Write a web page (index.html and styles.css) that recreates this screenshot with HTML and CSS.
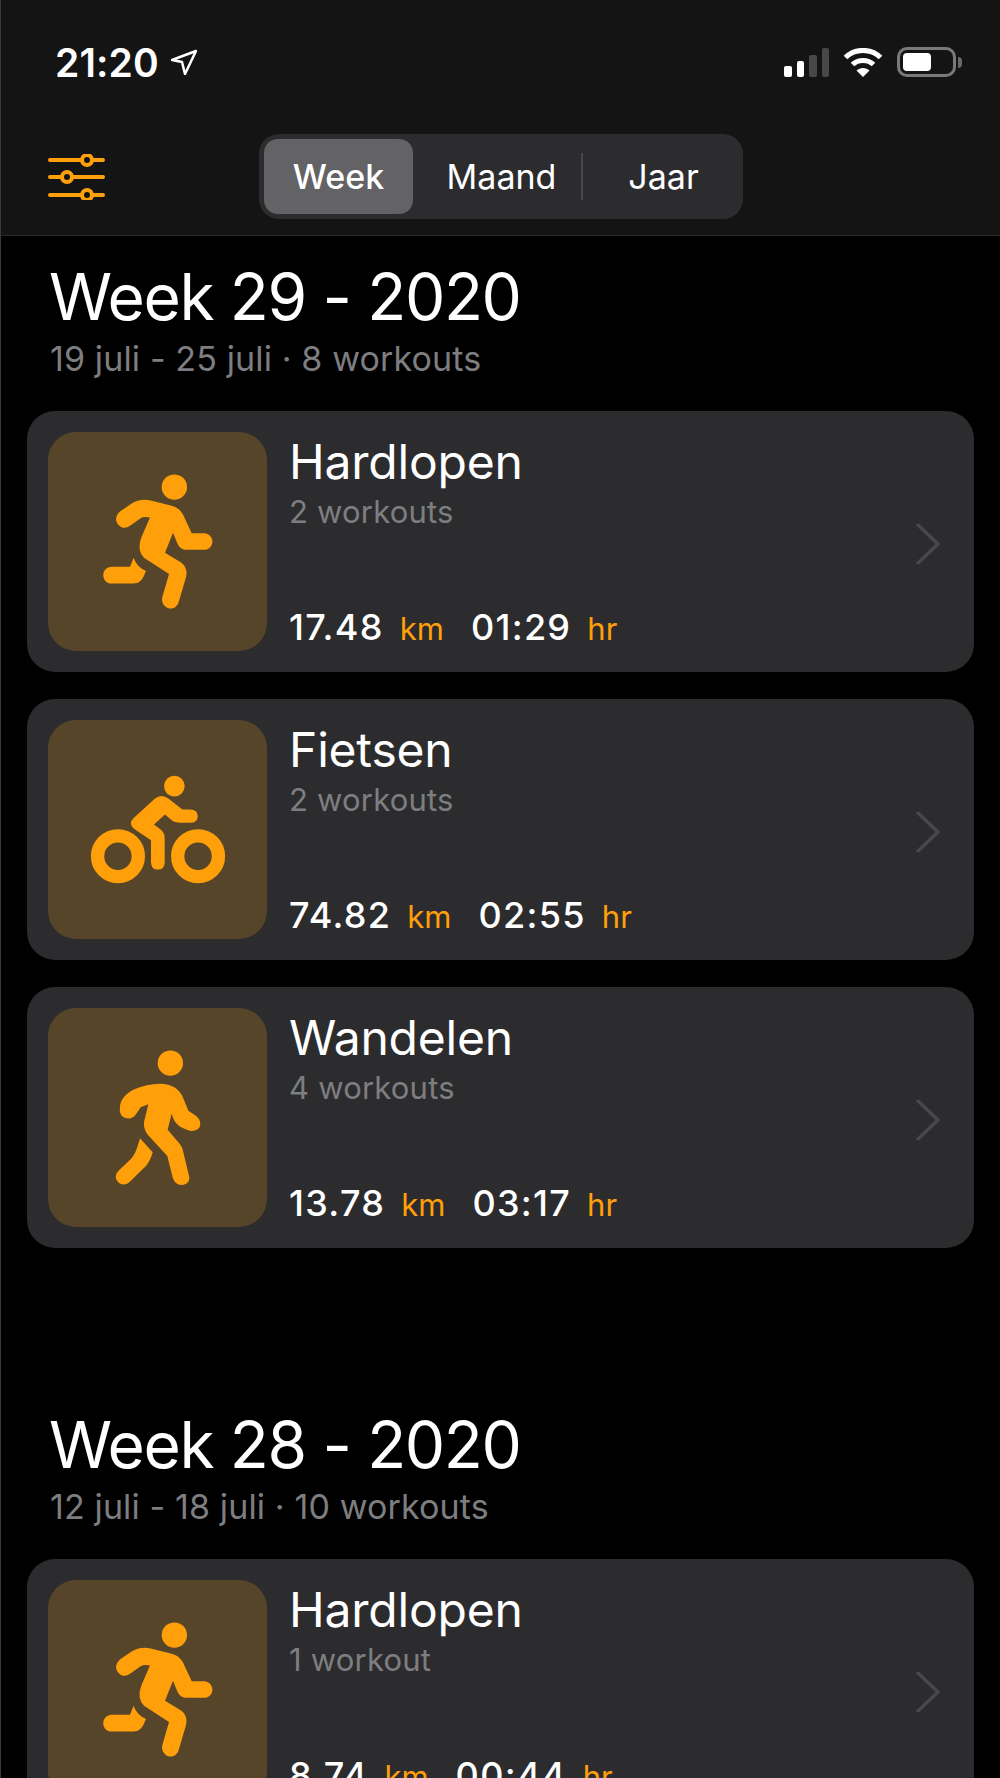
FILE: index.html
```html
<!DOCTYPE html>
<html lang="en">
<head>
    <meta charset="UTF-8">
    <meta name="viewport" content="width=device-width, initial-scale=1.0">
    <title>Workouts</title>
    <link rel="stylesheet" href="styles.css">
</head>
<body>
    <svg class="sprite" width="0" height="0">
        <symbol id="icon-run" viewBox="85 96 655 656">
            <circle cx="463" cy="261" r="38"/>
            <path d="M330 377 L362 354 Q372 348 390 352 L364 412 Q350 450 372 473 L447 521 L427 590 C422 612 440 625 452 625 C465 625 473 615 476 605 L498 530 C503 510 495 495 482 486 L435 458 L459 398 L472 430 C478 443 488 449 500 449 L552 449 C566 449 577 438 577 424 C577 410 566 399 552 399 L515 399 L490 345 C482 330 472 322 455 317 L392 301 C372 296 350 300 335 310 L302 333 C288 344 284 360 294 372 C304 385 318 386 330 377 Z"/>
            <path d="M275 500 L330 500 L341 473 C348 492 360 505 378 512 L370 530 C362 545 352 550 335 550 L275 550 C261 550 250 539 250 525 C250 511 261 500 275 500 Z"/>
        </symbol>
        <symbol id="icon-bike" viewBox="85 92 655 656">
            <circle cx="463" cy="290" r="31"/>
            <circle class="wheel" cx="294" cy="500" r="61"/>
            <circle class="wheel" cx="534" cy="500" r="61"/>
            <path d="M342 385 L405 327 Q425 312 445 327 L487 360 L510 360 Q533 360 533 380 Q533 400 510 400 L478 400 Q465 400 455 392 L435 375 L402 405 L422 420 Q434 430 434 445 L434 518 Q434 540 413 540 Q393 540 393 518 L393 452 L345 420 Q322 403 342 385 Z"/>
        </symbol>
        <symbol id="icon-walk" viewBox="85 87 655 656">
            <circle cx="451" cy="252" r="38"/>
            <path d="M300 385 C300 365 315 345 340 332 C365 320 395 314 420 314 C455 314 480 330 490 358 L505 395 L525 408 C545 420 545 445 530 452 C515 460 500 452 485 445 C470 437 460 425 455 403 L443 452 L480 495 Q487 503 490 520 L507 590 C512 610 495 617 483 617 C470 617 462 607 458 595 L442 530 L382 465 Q368 445 373 425 L385 375 L362 384 L348 405 C340 418 325 420 315 416 C303 412 298 400 300 385 Z"/>
            <path d="M360 477 L398 519 C392 540 385 555 370 568 L332 605 C318 620 300 618 292 605 C284 592 288 582 298 572 L332 540 C345 528 352 505 360 477 Z"/>
        </symbol>
        <symbol id="icon-chevron" viewBox="0 0 24 40">
            <path d="M2 1 L22 20 L2 39"/>
        </symbol>
    </svg>

    <header class="top">
        <div class="status-bar">
            <div class="clock">
                <span>21:20</span>
                <svg class="location" viewBox="0 0 26 26"><path d="M1 11 L25 2 L14 25 L11 13 Z"/></svg>
            </div>
            <div class="status-icons">
                <div class="signal">
                    <i class="bar bar-1"></i>
                    <i class="bar bar-2"></i>
                    <i class="bar bar-3 off"></i>
                    <i class="bar bar-4 off"></i>
                </div>
                <svg class="wifi" viewBox="0 0 40 29">
                    <path d="M20 29 L13.5 22.5 C17 19 23 19 26.5 22.5 Z"/>
                    <path class="arc" d="M9.5 16.5 C15 11 25 11 30.5 16.5"/>
                    <path class="arc" d="M2.5 9.5 C12 0 28 0 37.5 9.5"/>
                </svg>
                <div class="battery"><div class="battery-level"></div></div>
                <div class="battery-nub"></div>
            </div>
        </div>
        <div class="toolbar">
            <svg class="filter" viewBox="0 0 57 46">
                <path d="M2 6 H34 M44 6 H55 M2 23 H14 M24 23 H55 M2 41 H34 M44 41 H55"/>
                <circle cx="39" cy="6" r="5"/>
                <circle cx="19" cy="23" r="5"/>
                <circle cx="39" cy="41" r="5"/>
            </svg>
            <div class="segments">
                <div class="segment active">Week</div>
                <div class="segment month">Maand</div>
                <div class="segment year">Jaar</div>
            </div>
        </div>
    </header>

    <main>
        <section class="week">
            <h1>Week 29 - 2020</h1>
            <p class="range">19 juli - 25 juli · 8 workouts</p>

            <div class="card">
                <div class="tile"><svg><use href="#icon-run"/></svg></div>
                <div class="info">
                    <div>
                        <h2>Hardlopen</h2>
                        <p class="count">2 workouts</p>
                    </div>
                    <div class="stats"><b>17.48</b><span>km</span><b>01:29</b><span>hr</span></div>
                </div>
                <svg class="chevron"><use href="#icon-chevron"/></svg>
            </div>

            <div class="card">
                <div class="tile"><svg><use href="#icon-bike"/></svg></div>
                <div class="info">
                    <div>
                        <h2>Fietsen</h2>
                        <p class="count">2 workouts</p>
                    </div>
                    <div class="stats"><b>74.82</b><span>km</span><b>02:55</b><span>hr</span></div>
                </div>
                <svg class="chevron"><use href="#icon-chevron"/></svg>
            </div>

            <div class="card">
                <div class="tile"><svg><use href="#icon-walk"/></svg></div>
                <div class="info">
                    <div>
                        <h2>Wandelen</h2>
                        <p class="count">4 workouts</p>
                    </div>
                    <div class="stats"><b>13.78</b><span>km</span><b>03:17</b><span>hr</span></div>
                </div>
                <svg class="chevron"><use href="#icon-chevron"/></svg>
            </div>
        </section>

        <section class="week">
            <h1>Week 28 - 2020</h1>
            <p class="range">12 juli - 18 juli · 10 workouts</p>

            <div class="card">
                <div class="tile"><svg><use href="#icon-run"/></svg></div>
                <div class="info">
                    <div>
                        <h2>Hardlopen</h2>
                        <p class="count">1 workout</p>
                    </div>
                    <div class="stats"><b>8.74</b><span>km</span><b>00:44</b><span>hr</span></div>
                </div>
                <svg class="chevron"><use href="#icon-chevron"/></svg>
            </div>
        </section>
    </main>
</body>
</html>
```

FILE: styles.css
```css
html, body {
    margin: 0;
    height: 1778px;
    overflow: hidden;
    background: #000;
}

body {
    font-family: Inter, "Liberation Sans", sans-serif;
    color: #fff;
    border-left: 1px solid #3a3a3c;
}

h1, h2, p {
    margin: 0;
    font-weight: 400;
}

.sprite {
    position: absolute;
}

/* top bar */
.top {
    height: 235px;
    background: #141414;
    border-bottom: 1px solid #2a2a2c;
}

.status-bar {
    display: flex;
    justify-content: space-between;
    align-items: center;
    height: 30px;
    padding: 47px 38px 0 54px;
}

.clock {
    display: flex;
    align-items: center;
    gap: 12px;
    font-size: 39px;
    font-weight: 600;
    letter-spacing: 0.1px;
}

.location {
    width: 26px;
    height: 26px;
    fill: none;
    stroke: #fff;
    stroke-width: 2.5;
    stroke-linejoin: round;
}

.status-icons {
    display: flex;
    align-items: center;
}

.signal {
    display: flex;
    align-items: flex-end;
    gap: 5px;
    height: 29px;
    margin-right: 14px;
}

.bar {
    width: 7.5px;
    border-radius: 2px;
    background: #fff;
}

.bar.off {
    background: #48484a;
}

.bar-1 { height: 11px; }
.bar-2 { height: 16px; }
.bar-3 { height: 22px; }
.bar-4 { height: 29px; }

.wifi {
    width: 40px;
    height: 29px;
    margin-right: 14px;
    fill: #fff;
}

.wifi .arc {
    fill: none;
    stroke: #fff;
    stroke-width: 5;
}

.battery {
    box-sizing: border-box;
    width: 59px;
    height: 30px;
    padding: 3px;
    border: 3px solid #7a7a7c;
    border-radius: 10px;
}

.battery-level {
    width: 28px;
    height: 100%;
    border-radius: 4px;
    background: #fff;
}

.battery-nub {
    width: 4px;
    height: 11px;
    margin-left: 2px;
    border-radius: 0 4px 4px 0;
    background: #6a6a6c;
}

.toolbar {
    display: flex;
    align-items: center;
    margin-top: 57px;
    padding-left: 47px;
}

.filter {
    width: 57px;
    height: 46px;
    fill: none;
    stroke: #ff9f0a;
    stroke-width: 4;
    stroke-linecap: round;
}

.segments {
    display: flex;
    box-sizing: border-box;
    width: 484px;
    height: 85px;
    margin-left: 154px;
    padding: 5px;
    border-radius: 20px;
    background: #2c2c2e;
    font-size: 34px;
}

.segment {
    display: flex;
    align-items: center;
    justify-content: center;
    box-sizing: border-box;
}

.segment.active {
    width: 149px;
    border-radius: 14px;
    background: #636366;
    font-weight: 500;
}

.segment.month {
    position: relative;
    width: 170px;
    padding-left: 7px;
}

.segment.month::after {
    content: "";
    position: absolute;
    right: 0;
    top: 14px;
    bottom: 14px;
    width: 2px;
    background: #48484a;
}

.segment.year {
    width: 155px;
    padding-left: 6px;
}

/* list */
main {
    padding: 0 26px;
}

.week {
    margin-bottom: 159px;
}

h1 {
    margin: 23px 0 0 22px;
    font-size: 64px;
    line-height: 76px;
    letter-spacing: -1.35px;
}

.range {
    margin: 4px 0 0 23px;
    font-size: 34px;
    line-height: 40px;
    letter-spacing: 0.13px;
    color: #7e7e80;
}

.card {
    display: flex;
    align-items: center;
    box-sizing: border-box;
    width: 947px;
    height: 261px;
    margin-top: 27px;
    padding: 21px;
    border-radius: 28px;
    background: #2c2c2e;
}

.week > .range + .card {
    margin-top: 32px;
}

.tile {
    flex: none;
    width: 219px;
    height: 219px;
    border-radius: 28px;
    background: #57452a;
}

.tile svg {
    display: block;
    width: 219px;
    height: 219px;
    fill: #ff9f0a;
}

.wheel {
    fill: none;
    stroke: #ff9f0a;
    stroke-width: 40;
}

.info {
    flex: 1;
    display: flex;
    flex-direction: column;
    justify-content: space-between;
    height: 219px;
    margin-top: 2px;
    margin-left: 22px;
}

h2 {
    font-size: 48px;
    line-height: 58px;
    letter-spacing: -0.2px;
}

.count {
    margin-top: 3px;
    font-size: 31px;
    line-height: 36px;
    letter-spacing: 0.2px;
    color: #7e7e80;
}

.stats {
    display: flex;
    align-items: baseline;
    position: relative;
    top: -3px;
    font-size: 31px;
    line-height: 40px;
    color: #ff9f0a;
}

.stats b {
    font-size: 36px;
    font-weight: 500;
    letter-spacing: 1.3px;
    color: #fff;
}

.stats span {
    margin: 0 27px 0 16px;
}

.chevron {
    flex: none;
    width: 24px;
    height: 40px;
    margin-top: 4px;
    margin-right: 13px;
    fill: none;
    stroke: #48484a;
    stroke-width: 3.5;
    stroke-linecap: round;
    stroke-linejoin: round;
}
```
